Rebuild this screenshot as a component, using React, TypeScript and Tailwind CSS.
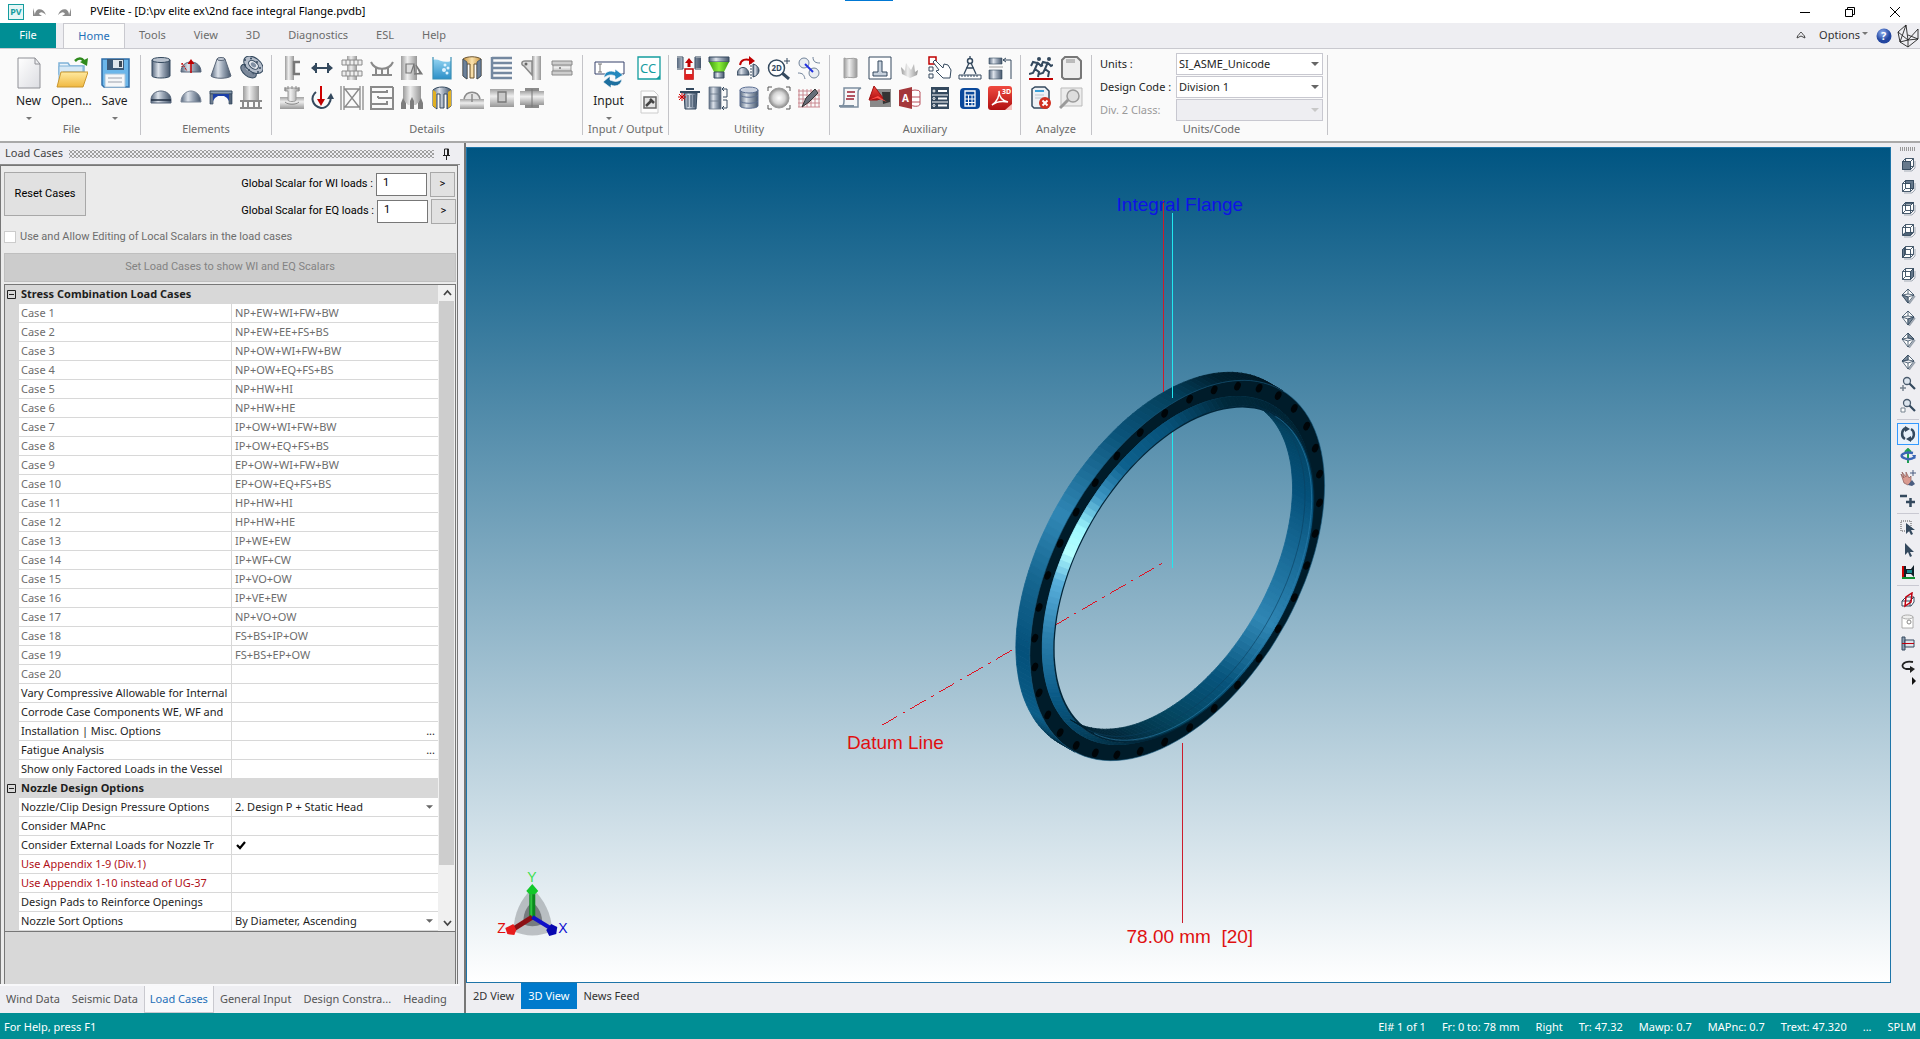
import type { ReactNode } from 'react';

const SHADE_STEEL = 'url(#steel)';
const SHADE_METAL = 'url(#metal)';
const INK = '#34495e';
const GREY = '#8a8a8a';

function Defs() {
  return (
    <svg className="absolute h-0 w-0" aria-hidden="true">
      <defs>
        <linearGradient id="steel">
          <stop offset="0" stopColor="#56677d" />
          <stop offset=".35" stopColor="#dde3eb" />
          <stop offset=".6" stopColor="#9aa6b6" />
          <stop offset="1" stopColor="#45566b" />
        </linearGradient>
        <linearGradient id="metal">
          <stop offset="0" stopColor="#9c9c9c" />
          <stop offset=".4" stopColor="#efefef" />
          <stop offset="1" stopColor="#969696" />
        </linearGradient>
        <linearGradient id="metalDown" x2="0" y2="1">
          <stop offset="0" stopColor="#a2a2a2" />
          <stop offset=".4" stopColor="#eeeeee" />
          <stop offset="1" stopColor="#989898" />
        </linearGradient>
        <linearGradient id="gold">
          <stop offset="0" stopColor="#c8923c" />
          <stop offset=".5" stopColor="#fbe3ae" />
          <stop offset="1" stopColor="#c8923c" />
        </linearGradient>
        <linearGradient id="folder" x2="0" y2="1">
          <stop offset="0" stopColor="#ffeaa0" />
          <stop offset="1" stopColor="#f0b840" />
        </linearGradient>
        <linearGradient id="water" x2="0" y2="1">
          <stop offset="0" stopColor="#8fd0ef" />
          <stop offset="1" stopColor="#2b8fc8" />
        </linearGradient>
        <linearGradient id="green">
          <stop offset="0" stopColor="#3c9a10" />
          <stop offset=".5" stopColor="#8df03a" />
          <stop offset="1" stopColor="#3c9a10" />
        </linearGradient>
        <linearGradient id="paper" x1="0" y1="0" x2="1" y2="1">
          <stop offset="0" stopColor="#ffffff" />
          <stop offset="1" stopColor="#dcdde2" />
        </linearGradient>
        <linearGradient id="red" x2="0" y2="1">
          <stop offset="0" stopColor="#f04a40" />
          <stop offset="1" stopColor="#b00f10" />
        </linearGradient>
        <radialGradient id="ball">
          <stop offset="0" stopColor="#ffffff" />
          <stop offset=".6" stopColor="#d4d4d4" />
          <stop offset="1" stopColor="#888888" />
        </radialGradient>
        <radialGradient id="help" cx=".4" cy=".3">
          <stop offset="0" stopColor="#8fb0f0" />
          <stop offset="1" stopColor="#2346a0" />
        </radialGradient>
      </defs>
    </svg>
  );
}

/* ---------- Ribbon icons, all on a 24 unit grid ---------- */

const ELEMENTS: [string, ReactNode][] = [
  ['Cylinder', <><path d="M3 4v16c0 1 4 2 9 2s9-1 9-2V4z" fill={SHADE_STEEL} stroke={INK} /><ellipse cx="12" cy="4" rx="9" ry="2.500" fill="#b9c2ce" stroke={INK} /></>],
  ['Torispherical head', <><path d="M2 16c0-7 5-10 10-10s10 3 10 10z" fill={SHADE_STEEL} stroke="#56657a" /><path d="M12 17V6" stroke="#c00000" strokeWidth="1.500" /><path d="M8.500 8L12 3l3.500 5z" fill="#c00000" /><path d="M3 7l5 8M3 7v4" stroke="#c00000" strokeDasharray="2 1" /></>],
  ['Cone', <><path d="M8 3L2 20c3 3 17 3 20 0L16 3z" fill={SHADE_STEEL} stroke="#596678" /><ellipse cx="12" cy="3" rx="4" ry="1.500" fill="#c5ccd6" stroke="#596678" /></>],
  ['Body flange', <><g transform="rotate(38 12 12)"><ellipse cx="12" cy="16" rx="9" ry="5" fill="#7b889a" stroke={INK} /><rect x="6" y="10" width="12" height="6" fill={SHADE_STEEL} /><ellipse cx="12" cy="8" rx="11" ry="7" fill="#b4bdca" stroke={INK} /><ellipse cx="12" cy="8" rx="5.500" ry="3.500" fill="#e6eaef" stroke={INK} /><ellipse cx="12" cy="8" rx="3" ry="2" fill="#8190a3" /></g><g fill={INK}><circle cx="6" cy="4" r="1" /><circle cx="12" cy="2.500" r="1" /><circle cx="18" cy="6" r="1" /><circle cx="21" cy="12" r="1" /><circle cx="19" cy="16" r="1" /><circle cx="6" cy="9" r="1" /><circle cx="10" cy="14" r="1" /></g></>],
  ['Elliptical head', <><path d="M2 17v-3C2 8 7 5 12 5s10 3 10 9v3z" fill={SHADE_STEEL} stroke="#56657a" /><path d="M2 14h20" stroke="#1f2e42" strokeWidth="1.500" /></>],
  ['Spherical head', <path d="M2 16c0-7 5-11 10-11s10 4 10 11z" fill={SHADE_STEEL} stroke="#7b8798" />],
  ['Flat head', <><path d="M1 5h22v3H1z" fill="#8b9eb2" stroke={INK} /><path d="M1 8h3v10H1zM20 8h3v10h-3z" fill={SHADE_STEEL} stroke={INK} strokeWidth=".7" /><path d="M4 8h16v7l-2-3-3-2H9l-3 2-2 3z" fill="#1b3fa8" /></>],
  ['Skirt', <><path d="M4 0h16v15H4z" fill={SHADE_METAL} /><path d="M1 15h22M1 22h22M4 15v7M9 15v7M15 15v7M20 15v7" stroke={GREY} strokeWidth="2" /></>],
];

const DETAILS: [string, ReactNode][] = [
  ['Stiffening ring', <><path d="M5 0h9v24H5z" fill={SHADE_METAL} /><path d="M14 5v14M14 6h6M14 18h6" stroke="#777" strokeWidth="2.500" /></>],
  ['Width', <><path d="M5 12h14M6 7v10M18 7v10" stroke={INK} strokeWidth="2" /><path d="M1 12l6-5v10zM23 12l-6-5v10z" fill={INK} /></>],
  ['Trays', <><path d="M7 0h10v24H7z" fill={SHADE_METAL} /><path d="M2 4h20v5H2zM2 15h20v5H2zM6 4v5M10 4v5M14 4v5M18 4v5M6 15v5M10 15v5M14 15v5M18 15v5" stroke={GREY} fill="#eee" /></>],
  ['Saddle', <><path d="M1 6c4 9 18 9 22 0" fill="none" stroke={GREY} strokeWidth="2" /><path d="M2 19h20M6 11v8M12 13v6M18 11v8" stroke={GREY} strokeWidth="2" /></>],
  ['Clip', <><path d="M1 0h16v24H1z" fill={SHADE_METAL} /><path d="M6 8h8l-3 9H6zM14 8l1 10 5-1-4-8 6 9h-8" fill="#ddd" stroke="#777" strokeWidth="1.200" /></>],
  ['Liquid', <><path d="M3 4c6-2 9 4 18 1v18H3z" fill="url(#water)" /><path d="M3 1v22h18V1" fill="none" stroke="#3a8fb5" strokeWidth="1.200" /><g fill="#dff3ff"><circle cx="15" cy="9" r="1.500" /><circle cx="18" cy="12" r="1.500" /><circle cx="14" cy="14" r="2" /><circle cx="17" cy="17" r="1.500" /></g></>],
  ['Insulation', <><path d="M3 3c4-3 14-3 18 0v17l-4 3V8h-3v14h-4V8H7v15l-4-3z" fill="url(#gold)" stroke="#6b5430" /><path d="M3 3l4 3v17l-4-3zM21 3l-4 3v17l4-3z" fill="#6d8199" stroke={INK} strokeWidth=".7" /></>],
  ['Packing', <path d="M2 2h20M2 7h20M2 12h20M2 17h20M2 22h20M2 1v22" stroke="#7488a0" strokeWidth="2.500" />],
  ['Lug', <><path d="M12 0h9v24h-9z" fill={SHADE_METAL} /><path d="M12 5H5c-4 0-4 4-1 5l8 9z" fill="#ddd" stroke={GREY} strokeWidth="1.500" /><circle cx="6" cy="8" r="1.500" fill="#666" /></>],
  ['Half pipe', <><path d="M3 7h18v11H3z" fill="url(#metalDown)" stroke="#999" /><path d="M2 5h20v4H2zM2 15h20v4H2z" fill="#cdcdcd" stroke="#888" /><circle cx="10" cy="12" r="1" fill="#777" /></>],
  ['Nozzle', <><path d="M0 11h24v12H0z" fill="url(#metalDown)" /><path d="M5 2h14v3h-3v9c0 2-8 2-8 0V5H5z" fill={SHADE_METAL} stroke="#999" /><path d="M5 1v4M8 0v3M12 0v3M16 0v3M19 1v4M5 16c3 3 11 3 14 0" stroke={GREY} fill="none" /></>],
  ['Forces and moments', <><path d="M6 6c-6 5-4 14 5 16 7 0 10-6 10-12" fill="none" stroke={INK} strokeWidth="2" /><path d="M17 13l4-6 3 6z" fill={INK} /><path d="M11 0v14" stroke="#d00000" strokeWidth="2" /><path d="M7 13h8l-4 7z" fill="#c00000" /></>],
  ['Packed bed', <path d="M1 0v24M4 0v24M20 0v24M23 0v24M4 3h16M4 21h16M5 3l14 18M19 3L5 21" fill="none" stroke={GREY} strokeWidth="1.300" />],
  ['Baffles', <path d="M23 1H1v22h22V1M1 6h16v-2M23 12H8M8 12v-2M1 18h16v-3" fill="none" stroke={GREY} strokeWidth="2" />],
  ['Legs', <><path d="M3 0h18v13l-5 6H8l-5-6z" fill={SHADE_METAL} /><path d="M1 23v-6l2-5 3 5v6zM10 23v-8l2-4 2 4v8zM18 23v-6l3-5 2 5v6z" fill="#7d7d7d" /></>],
  ['Lining', <><path d="M3 4c4-4 14-4 18 0v16l-4 3V8h-3v14h-4V8H7v15l-4-3z" fill={SHADE_STEEL} stroke={INK} /><path d="M3 4l3 2v16l-3-2zM18 6l3-2v16l-3 2z" fill="#e0b023" /></>],
  ['Reinforcing pad', <><path d="M0 13h24v10H0z" fill="url(#metalDown)" /><path d="M4 13c2-9 14-9 16 0M12 8v8" fill="#e4e4e4" stroke={GREY} strokeWidth="1.500" /></>],
  ['Platform', <><path d="M0 3h24v18H0z" fill="url(#metalDown)" /><path d="M8 6h8v10H8z" fill="#c9c9c9" stroke="#777" strokeWidth="1.300" /></>],
  ['Stiffener', <><path d="M0 5h24v14H0z" fill="url(#metalDown)" /><path d="M5 2h14v3H5zM5 19h14v3H5z" fill={GREY} /><path d="M12 3v18" stroke="#777" /></>],
];

const UTILITY: [string, ReactNode][] = [
  ['Insert element', <><path d="M0 2h6v10H0zM18 2h6v10h-6z" fill={SHADE_STEEL} /><path d="M0 1h6v12H0M24 1h-6v12h6" fill="none" stroke={INK} /><path d="M8 13h8v10H8z" fill="#fff" stroke="#c00000" strokeWidth="1.500" /><path d="M8 18h8v5H8z" fill="#e02020" /><path d="M8 7l4-5 4 5h-2.500v4h-3V7z" fill="#c00000" /></>],
  ['Change diameter', <><path d="M2 1h20v5H2z" fill={SHADE_STEEL} stroke={INK} /><path d="M2 6h20l-5 10H7z" fill="url(#green)" /><path d="M7 16h10v6H7z" fill={SHADE_STEEL} stroke={INK} /></>],
  ['Flip element', <><path d="M0 19c0-10 12-10 12 0z" fill={SHADE_STEEL} stroke={INK} /><path d="M16 8v13c8-2 8-11 0-13z" fill={SHADE_STEEL} stroke={INK} /><path d="M14 6v18" stroke={INK} strokeDasharray="2 1" /><path d="M3 9c1-6 6-6 10-5" fill="none" stroke="#c00000" strokeWidth="2" /><path d="M12 0l6 5-6 4z" fill="#c00000" /></>],
  ['2D zoom', <><circle cx="9.500" cy="12" r="8" fill="#fff" stroke={INK} strokeWidth="1.500" /><text x="4.500" y="15" fontSize="8" fontWeight="700" fill={INK}>2D</text><path d="M15 17l7 6" stroke={INK} strokeWidth="3" /><path d="M20 2v6M17 5h6" stroke={INK} /></>],
  ['Link nozzles', <><circle cx="7" cy="7" r="5" fill="#e9edf2" stroke="#71839a" /><circle cx="17" cy="17" r="5" fill="#e9edf2" stroke="#71839a" /><path d="M8 8l8 8" stroke="#2030e0" strokeWidth="2" /><path d="M16 1c0 5 3 6 7 6M1 17c5 0 6 2 7 6" stroke="#71839a" fill="none" /></>],
  ['Delete element', <><path d="M7 7h13l-1 16H8z" fill={SHADE_STEEL} stroke={INK} /><path d="M3 6h20M9 3h8" stroke={INK} strokeWidth="2" /><path d="M11 9v12M14 9v12M17 9v12" stroke={INK} /><path d="M5 7v8M1 11h8M2 8l6 6M8 8l-6 6" stroke="#d00000" /></>],
  ['Element order', <><path d="M2 1h12v22H2zM2 8h12M2 15h12" fill={SHADE_STEEL} stroke="#6b7a8c" strokeWidth=".8" /><path d="M16 3h4v8h-4M16 14h4v8h-4M17 1l-2 2 2 2M17 20l-2 2 2 2" fill="none" stroke={INK} /></>],
  ['Materials', <><path d="M3 4v16c0 3 18 3 18 0V4z" fill={SHADE_STEEL} stroke="#5c6f92" /><ellipse cx="12" cy="4" rx="9" ry="3" fill="#c8d0de" stroke="#5c6f92" /><path d="M3 9c2 3 16 3 18 0M3 15c2 3 16 3 18 0" fill="none" stroke="#5c6f92" /></>],
  ['Sphere', <><circle cx="12" cy="12" r="10" fill="url(#ball)" stroke="#999" /><path d="M1 5V1h4M19 1h4v4M23 19v4h-4M5 23H1v-4" fill="none" stroke="#555" /></>],
  ['Edit grid', <><path d="M2 3v18M6 3v18M10 3v18M14 3v18M18 3v18M22 3v18M1 5h22M1 9h22M1 13h22M1 17h22M1 21h22" stroke="#c98890" /><path d="M5 21l4-9 9-9 3 4-9 9z" fill="#666d78" stroke="#333" /></>],
];

const AUXILIARY: [string, ReactNode][] = [
  ['Pipe', <path d="M6 2c3 2 9-1 13 1v18c-4 2-8-1-13 1z" fill={SHADE_METAL} stroke="#a0a0a0" />],
  ['Base ring', <><path d="M1 1h22v22H1z" fill="#fff" stroke={INK} /><path d="M10 5h4v11h5v4H5v-4h5z" fill="#c8d2dd" stroke={INK} /></>],
  ['Seismic', <path d="M4 18l-1-7 4 4 1-8 5 7 3-6 1 8 3-2-1 5-7 3z" fill={SHADE_METAL} />],
  ['Select list', <><path d="M1 1h7v7H1z" fill="#fff" stroke="#c00000" strokeWidth="1.500" /><path d="M1 11h4v4H1zM1 18h4v4H1z" fill="none" stroke={INK} /><path d="M7 4l8 8 1-4 4 1 3 5-1 8h-7l-7-7 3-1-6-8z" fill="#fff" stroke={INK} /></>],
  ['Measure', <><path d="M1 19h22v4H1zM4 19v2M7 19v2M10 19v2M13 19v2M16 19v2M19 19v2" fill="#fff" stroke={INK} /><circle cx="12" cy="5" r="2.500" fill="#fff" stroke={INK} strokeWidth="1.500" /><path d="M12 0v3M11 7L6 18M13 7l5 11M8 12h8" stroke={INK} strokeWidth="1.300" /></>],
  ['Nozzle schedule', <><path d="M1 2h13v6H1zM1 14h13v9H1z" fill={SHADE_STEEL} stroke={INK} strokeWidth=".6" /><path d="M15 4h8v19M18 2l-3 2 3 2" fill="none" stroke={INK} /><path d="M1 11h14" stroke="#a0a0a0" /></>],
  ['Input echo', <><path d="M6 2h17c-3 1-3 3-3 6v13H2c3-1 4-2 4-6z" fill="#f6f7f8" stroke="#7d8fa0" strokeWidth="1.500" /><path d="M1 20h15" stroke="#7d8fa0" strokeWidth="2" /><path d="M9 6h8M9 10h8M8 13h8" stroke="#9d2030" strokeWidth="1.500" /></>],
  ['AutoCAD export', <><path d="M9 3h14v18H2v-8z" fill="#8a8a8a" /><path d="M14 6h8v10l-7 2z" fill="#333" /><path d="M1 14L6 0l9 12-6 2z" fill="url(#red)" stroke="#a01010" /><path d="M1 14l8-2 10 4-9-6z" fill="#ff5048" /></>],
  ['Access export', <><ellipse cx="17" cy="6" rx="5" ry="2" fill="#fff" stroke="#b8505c" /><path d="M12 6v12c2 3 10 3 10 0V6" fill="#fff" stroke="#b8505c" /><path d="M13 11h9M13 16h9" stroke="#b8505c" /><path d="M1 4l13-3v22L1 20z" fill="#a4373a" /><text x="4" y="16" fontSize="10" fontWeight="700" fill="#fff">A</text></>],
  ['Setup', <><path d="M3 1h18v22H3z" fill={INK} /><path d="M4 9h16M4 16h16" stroke="#fff" /><path d="M10 5h9M10 12.500h9M10 19.500h9" stroke="#fff" strokeWidth="2" /><g fill="none" stroke="#fff"><circle cx="6" cy="5" r="1" /><circle cx="6" cy="12.500" r="1" /><circle cx="6" cy="19.500" r="1" /></g></>],
  ['Calculator', <><rect x="2" y="2" width="20" height="21" rx="4" fill="#09489b" /><path d="M7 5h10v15H7z" fill="none" stroke="#fff" strokeWidth="1.300" /><path d="M7 9h10M7 13h10M7 16.500h10M10.500 9v11M14 9v11" stroke="#fff" /></>],
  ['3D PDF', <><rect x="0" y="0" width="24" height="24" rx="3" fill="url(#red)" /><path d="M4 19c5-3 8-10 7-14 0 7 5 10 9 11-5-1-11-1-16 3z" fill="none" stroke="#fff" strokeWidth="1.500" /><text x="14" y="8" fontSize="7" fontWeight="700" fill="#fff">3D</text><path d="M17 24l7-6v6z" fill="#f5c0bc" /></>],
];

const RUNNER = 'M9 6L6 13l4 3-1 5M6 13l-2 4-4 1M8 7L4 6 2 10M9 7l3 3 2-1';

const ANALYZE: [string, ReactNode][] = [
  ['Analyze', <><circle cx="10" cy="3" r="2" fill={INK} /><circle cx="20" cy="3" r="2" fill={INK} /><path d={RUNNER} fill="none" stroke={INK} strokeWidth="2" /><g transform="translate(10 0)"><path d={RUNNER} fill="none" stroke={INK} strokeWidth="2" /></g><path d="M0 23h24" stroke="#c00000" strokeWidth="2" /></>],
  ['Review', <><path d="M3 4l3-3h12l4 4v17l-2 1H5l-2-2z" fill="#ededed" stroke="#777" strokeWidth="2" /><path d="M7 4h9M7 6h9" stroke="#888" /></>],
  ['Errors', <><path d="M3 3l3-2h10l4 4v14l-2 3H5l-2-2z" fill="#eef1f5" stroke={INK} strokeWidth="1.500" /><path d="M6 5h9" stroke="#3aa0d8" strokeWidth="2" /><path d="M6 9h9M6 12h9" stroke="#b9c3cf" /><circle cx="16" cy="17" r="6" fill="#d03020" /><path d="M13.500 14.500l5 5M18.500 14.500l-5 5" stroke="#fff" strokeWidth="2" /></>],
  ['Preview', <><path d="M2 2h21v18H2z" fill="#ececec" stroke="#bbb" /><circle cx="14" cy="10" r="6" fill="#ddd" stroke="#9a9a9a" strokeWidth="1.500" /><path d="M9 14l-8 8" stroke="#9a9a9a" strokeWidth="3" /></>],
];

/* ---------- Right hand view toolbar, 16 unit grid ---------- */

const CUBE = 'M2.500 5.500l3-3h8v8l-3 3h-8zM2.500 5.500h8v8M10.500 5.500l3-3M5.500 2.500v8h8M5.500 10.500l-3 3';
const ISO = 'M8 1l6 6-6 8-6-8zM2 7l6 2 6-2M8 9v6M8 1v5M2 7l6-1 6 1';

const cube = (d: string) => (
  <><path d="M4 15h8l3-3V5" fill="none" stroke="#a4acb6" /><path d={CUBE} fill="#fff" stroke={INK} strokeWidth=".9" /><path d={d} fill="#66788b" stroke={INK} strokeWidth=".9" /></>
);
const iso = (d: string) => (
  <><path d="M9 16l6-8" stroke="#9aa3ae" strokeWidth="1.500" /><path d={ISO} fill="#fff" stroke={INK} strokeWidth=".8" /><path d={d} fill="#7b8a9a" stroke={INK} strokeWidth=".8" /></>
);
const magnifier = (
  <><circle cx="7" cy="5" r="3.500" fill="#dde5ee" stroke="#4b5b6d" strokeWidth="1.300" /><path d="M9.500 7.500L15 13" stroke={INK} strokeWidth="2.200" /></>
);

const VIEW_TOOLS: [string, ReactNode][][] = [
  [
    ['Front', cube('M2.500 5.500h8v8h-8z')],
    ['Back', cube('M5.500 2.500h8v8h-3v-5h-5z')],
    ['Top', cube('M4 4l1.500-1.500h8L12 4z')],
    ['Bottom', cube('M3 13l1.500-2H12l-1.500 2z')],
    ['Left', cube('M2.500 5.500l2-2v8l-2 2z')],
    ['Right', cube('M10.500 5.500l3-3v8l-3 3z')],
    ['Isometric SW', iso('M2 7l6 2v6z')],
    ['Isometric SE', iso('M14 7L8 9v6z')],
    ['Isometric NE', iso('M8 1l6 6-6-1z')],
    ['Isometric NW', iso('M8 1L2 7l6-1z')],
    ['Zoom extents', <>{magnifier}<path d="M3 9v6M0 12h6" stroke="#77838f" strokeWidth="1.500" /></>],
    ['Zoom window', <>{magnifier}<path d="M1 10h4v4H1z" fill="#fff" stroke="#77838f" /></>],
  ],
  [
    ['Orbit', <><path d="M6 2C1 4 1 11 5 13M10 14c5-2 5-9 1-11" fill="none" stroke={INK} strokeWidth="2.500" /><path d="M5 0l5 3-5 3zM11 16l-5-3 5-3z" fill={INK} /></>],
    ['Turntable', <><path d="M8 1v14M5 4l3-3 3 3" fill="none" stroke="#1fa050" strokeWidth="2" /><path d="M13 5C4 3-2 8 4 10c4 2 8 1 11-1" fill="none" stroke="#3a66b5" strokeWidth="2.500" /><path d="M12 7l4 0-1 4z" fill="#3a66b5" /></>],
    ['Pan', <><path d="M1 4l3 4-2-6 4 5V2l3 6 2-2v6l-3 3-4-2z" fill="#d99a90" stroke="#8a5a58" strokeWidth=".7" /><path d="M8 15l4-5 3 4-3 2z" fill="#4a5d80" /><path d="M13 0v6M10 3h6" stroke="#4a5d80" /></>],
    ['Zoom', <path d="M0 4h7M6 10h9M10.500 6v9" stroke={INK} strokeWidth="2.500" />],
  ],
  [
    ['Select window', <><path d="M1 1h10v10H1z" fill="none" stroke="#555" strokeDasharray="1 1" /><path d="M6 3v11l3-3 2 4 2-1-2-4h4z" fill={INK} /></>],
    ['Select', <path d="M5 1v12l3-3 2 5 2-1-2-4h4z" fill={INK} />],
    ['Show axes', <><path d="M3 2v12" stroke="#d00000" strokeWidth="2" /><path d="M2 14h13" stroke="#109030" strokeWidth="2" /><path d="M4 2h2v3h5l3-4v12l-3-3H6v3H4z" fill="#102028" /><path d="M7 6h5v3H7z" fill="#1a8a90" /></>],
  ],
  [
    ['Clip plane', <><path d="M2 9l4-4h8v5l-3 4H2zM2 9h8l4-4M10 9v5" fill="#fff" stroke={INK} /><path d="M5 14l1-9 6-4-1 9z" fill="none" stroke="#c00010" strokeWidth="1.500" /></>],
    ['Transparent', <><path d="M2 3h11v11H2z" fill="#fff" stroke="#999" strokeWidth=".8" /><ellipse cx="7.500" cy="3" rx="5.500" ry="2" fill="#eee" stroke="#999" strokeWidth=".8" /><circle cx="9" cy="8" r="2" fill="none" stroke="#888" /></>],
    ['Flange view', <><path d="M2 1h3v13H2z" fill="#8fa0b2" stroke={INK} /><path d="M5 4h9v7H5z" fill="#dde3ea" stroke={INK} /><path d="M2 7.500h12" stroke="#c00010" /></>],
    ['Rotate', <><path d="M13 4C3 2-1 9 6 11h6" fill="none" stroke="#222" strokeWidth="1.800" /><path d="M10 8l5 3-5 4z" fill="#222" /></>],
  ],
];

/* ---------- Load case grid ---------- */

const CASES = [
  'NP+EW+WI+FW+BW', 'NP+EW+EE+FS+BS', 'NP+OW+WI+FW+BW', 'NP+OW+EQ+FS+BS', 'NP+HW+HI',
  'NP+HW+HE', 'IP+OW+WI+FW+BW', 'IP+OW+EQ+FS+BS', 'EP+OW+WI+FW+BW', 'EP+OW+EQ+FS+BS',
  'HP+HW+HI', 'HP+HW+HE', 'IP+WE+EW', 'IP+WF+CW', 'IP+VO+OW',
  'IP+VE+EW', 'NP+VO+OW', 'FS+BS+IP+OW', 'FS+BS+EP+OW', '',
];

interface GridRow {
  label: string;
  kind?: 'more' | 'check' | 'select';
  value?: string;
  tone?: string;
}

const STRESS_ROWS: GridRow[] = [
  ...CASES.map((value, i) => ({ label: `Case ${i + 1}`, value, tone: 'text-[#6d6d6d]' })),
  { label: 'Vary Compressive Allowable for Internal' },
  { label: 'Corrode Case Components WE, WF and' },
  { label: 'Installation | Misc. Options', kind: 'more' },
  { label: 'Fatigue Analysis', kind: 'more' },
  { label: 'Show only Factored Loads in the Vessel' },
];

const NOZZLE_ROWS: GridRow[] = [
  { label: 'Nozzle/Clip Design Pressure Options', kind: 'select', value: '2. Design P + Static Head' },
  { label: 'Consider MAPnc' },
  { label: 'Consider External Loads for Nozzle Tr', kind: 'check' },
  { label: 'Use Appendix 1-9 (Div.1)', tone: 'text-[#b01018]' },
  { label: 'Use Appendix 1-10 instead of UG-37', tone: 'text-[#b01018]' },
  { label: 'Design Pads to Reinforce Openings' },
  { label: 'Nozzle Sort Options', kind: 'select', value: 'By Diameter, Ascending' },
];

const PANEL_TABS = ['Wind Data', 'Seismic Data', 'Load Cases', 'General Input', 'Design Constra...', 'Heading'];
const STATUS = ['El# 1 of 1', 'Fr: 0 to: 78 mm', 'Right', 'Tr: 47.32', 'Mawp: 0.7', 'MAPnc: 0.7', 'Trext: 47.320', '...', 'SPLM'];

function Icon({ children, className = 'h-6 w-6', box = 24 }: { children: ReactNode; className?: string; box?: number }) {
  return <svg className={`${className} shrink-0`} viewBox={`0 0 ${box} ${box}`} fill="none" aria-hidden="true">{children}</svg>;
}

function Triangle({ className }: { className: string }) {
  return <svg className={className} viewBox="0 0 8 4" aria-hidden="true"><path d="M0 0h8L4 4z" fill="currentColor" /></svg>;
}

function Group({ title, children, className = 'px-[5px]' }: { title: string; children: ReactNode; className?: string }) {
  return (
    <section className="flex py-1">
      <div className={`flex flex-col ${className}`}>
        <div className="flex-1">{children}</div>
        <p className="text-center text-[11px] leading-4 text-[#6a6a6a]">{title}</p>
      </div>
      <div className="my-0.5 w-px bg-[#c4c4c8]" />
    </section>
  );
}

function IconGrid({ items, columns }: { items: [string, ReactNode][]; columns: string }) {
  return (
    <div className={`grid ${columns}`}>
      {items.map(([name, art]) => (
        <button key={name} type="button" aria-label={name} className="flex h-[30px] w-[30px] items-center justify-center">
          <Icon>{art}</Icon>
        </button>
      ))}
    </div>
  );
}

function BigButton({ label, arrow, children }: { label: string; arrow?: boolean; children: ReactNode }) {
  return (
    <button type="button" className="flex w-[43px] flex-col items-center pt-1 text-xs leading-4 text-[#1e1e1e]">
      <svg className="h-8 w-8" viewBox="0 0 32 32" fill="none" aria-hidden="true">{children}</svg>
      <span className="mt-1">{label}</span>
      {arrow && <Triangle className="mt-2 h-[3px] w-1.5 text-[#777]" />}
    </button>
  );
}

function Ribbon() {
  return (
    <div className="flex h-[95px] shrink-0 border-t border-b-2 border-t-[#c9c9cf] border-b-[#a9a9a9] bg-[#fafafa]">
      <Group title="File" className="pr-1 pl-[7px]">
        <div className="flex">
          <BigButton label="New" arrow>
            <path d="M5 1h17l5 6v24H5z" fill="url(#paper)" stroke="#8f9096" />
            <path d="M22 1v6h5" stroke="#8f9096" />
          </BigButton>
          <BigButton label="Open...">
            <path d="M3 6h9l2 3h14v8H3z" fill="#eaf3fa" stroke="#7fb2d8" strokeWidth="1.500" />
            <path d="M3 30V9h24v6H7z" fill="#d6e8f5" stroke="#7fb2d8" />
            <path d="M5 15h27l-5 15H1z" fill="url(#folder)" stroke="#c9962e" />
            <path d="M19 4c4-4 8-3 10 2" stroke="#2f8a1c" strokeWidth="2.500" />
            <path d="M24 5l8-4-1 8z" fill="#2f8a1c" />
          </BigButton>
          <BigButton label="Save" arrow>
            <path d="M3 2h27v28H5l-2-2z" fill="#6bb6ea" stroke="#2f6ea8" strokeWidth="1.500" />
            <path d="M8 2h17v11H8z" fill="#3c5a78" />
            <path d="M14 3h10v8H14z" fill="#dfe7ee" />
            <path d="M20 4h3v6h-3z" fill="#3b4a58" />
            <path d="M6 17h20v13H6z" fill="#f5f7f9" stroke="#a9c4da" />
            <path d="M9 21h14M9 25h14" stroke="#b9bfc6" strokeWidth="1.500" />
          </BigButton>
        </div>
      </Group>
      <Group title="Elements"><IconGrid items={ELEMENTS} columns="grid-cols-4" /></Group>
      <Group title="Details"><IconGrid items={DETAILS} columns="grid-cols-10" /></Group>
      <Group title="Input / Output" className="px-1">
        <div className="flex gap-1">
          <BigButton label="Input" arrow>
            <path d="M2 5h29v12H2z" fill="#fff" stroke="#34406a" />
            <path d="M5 7h4M7 7v8M5 15h4" stroke="#777" />
            <path d="M11 21c0-7 7-8 11-6v-3l8 6-8 5v-4c-4-2-8-1-11 2z" fill="#2388bd" stroke="#fafafa" strokeWidth=".7" />
            <path d="M29 22c-1 7-7 8-11 6v3l-8-6 7-6v4c5 2 8 2 12-1z" fill="#1c6f9f" stroke="#fafafa" strokeWidth=".7" />
          </BigButton>
          <IconGrid
            columns="grid-cols-1"
            items={[
              ['CC', <><path d="M1 1h22v22H1z" fill="#fff" stroke="#159d9f" strokeWidth="1.300" /><text x="3" y="17" fontSize="13" fill="#159d9f">CC</text><path d="M19 23l4-4v4z" fill="#159d9f" /></>],
              ['Export', <><path d="M4 1h13l4 4v18H4z" fill="#fdfdfd" stroke="#ccc" /><path d="M7 7h12v11H7z" fill="#e4e4e4" stroke="#666" strokeWidth="1.500" /><path d="M9 16l5-5M13 9l4 4" stroke="#444" strokeWidth="2.500" /></>],
            ]}
          />
        </div>
      </Group>
      <Group title="Utility"><IconGrid items={UTILITY} columns="grid-cols-5" /></Group>
      <Group title="Auxiliary"><IconGrid items={AUXILIARY} columns="grid-cols-6" /></Group>
      <Group title="Analyze"><IconGrid items={ANALYZE} columns="grid-cols-2" /></Group>
      <Group title="Units/Code" className="pr-1 pl-2">
        <div className="flex flex-col gap-px text-[11px] text-[#1e1e1e]">
          <RibbonSelect id="units" label="Units :" value="SI_ASME_Unicode" />
          <RibbonSelect id="design-code" label="Design Code :" value="Division 1" />
          <RibbonSelect id="div2" label="Div. 2 Class:" value="" disabled />
        </div>
      </Group>
    </div>
  );
}

function RibbonSelect({ id, label, value, disabled }: { id: string; label: string; value: string; disabled?: boolean }) {
  return (
    <div className="flex items-center">
      <label htmlFor={id} className={`w-[76px] whitespace-nowrap ${disabled ? 'text-[#9a9a9a]' : ''}`}>{label}</label>
      <div className="relative w-[147px]">
        <select id={id} disabled={disabled} className={`h-[22px] w-full appearance-none border border-[#c8c8d0] px-0.5 ${disabled ? 'bg-[#eeeef2]' : 'bg-white'}`}>
          <option>{value}</option>
        </select>
        <Triangle className={`pointer-events-none absolute top-[9px] right-1 h-1 w-2 ${disabled ? 'text-[#c8c8c8]' : 'text-[#666]'}`} />
      </div>
    </div>
  );
}

function TitleBar() {
  return (
    <header className="relative flex h-[23px] shrink-0 items-center bg-white px-2">
      <div className="absolute top-0 left-[44%] h-px w-12 bg-[#0078d4]" />
      <span className="flex h-4 w-4 items-center justify-center border border-[#159d9f] bg-[#e6f6f6] text-[9px] font-bold text-[#159d9f]">PV</span>
      <button type="button" aria-label="Undo" className="ml-2"><Icon box={16} className="h-4 w-4"><path d="M3 11c0-7 8-8 11 0-4-4-6-3-7-1l3 2H1V4z" fill="#8b8b8b" /></Icon></button>
      <button type="button" aria-label="Redo" className="ml-2"><Icon box={16} className="h-4 w-4"><path d="M13 11c0-7-8-8-11 0 4-4 6-3 7-1l-3 2h9V4z" fill="#8b8b8b" /></Icon></button>
      <h1 className="ml-[18px] flex-1 text-[11px] text-black">PVElite - [D:\pv elite ex\2nd face integral Flange.pvdb]</h1>
      <div className="flex gap-[31px] pr-2.5">
        <button type="button" aria-label="Minimize"><Icon box={14} className="h-3.5 w-3.5"><path d="M2 7.500h10" stroke="#000" /></Icon></button>
        <button type="button" aria-label="Restore"><Icon box={14} className="h-3.5 w-3.5"><path d="M2.500 4.500h7v7h-7zM4.500 4.500v-2h7v7h-2" stroke="#000" /></Icon></button>
        <button type="button" aria-label="Close"><Icon box={14} className="h-3.5 w-3.5"><path d="M2 2l10 10M12 2L2 12" stroke="#000" /></Icon></button>
      </div>
    </header>
  );
}

function MenuBar() {
  return (
    <nav className="flex h-[25px] shrink-0 items-stretch bg-[#eeeef2] text-[11px] text-[#6b6b6b]">
      <button type="button" className="mr-[7px] w-14 bg-[#008e94] text-white">File</button>
      <button type="button" className="-mb-px w-[62px] border border-b-0 border-[#c9c9cf] bg-[#fafafa] text-[#1e70b8]">Home</button>
      {['Tools', 'View', '3D', 'Diagnostics', 'ESL', 'Help'].map((tab) => (
        <button key={tab} type="button" className="px-3.5">{tab}</button>
      ))}
      <div className="ml-auto flex items-center text-[#333]">
        <button type="button" aria-label="Collapse ribbon"><Icon box={12} className="h-3 w-3"><path d="M2 8c0-3 4-5 4-6 0 1 4 3 4 6l-4-2z" stroke="#444" /></Icon></button>
        <button type="button" className="ml-3 flex items-center">Options<Triangle className="mt-[-4px] ml-0.5 h-[3px] w-1.5 text-[#777]" /></button>
        <button type="button" aria-label="Help" className="ml-2">
          <Icon box={16} className="h-4 w-4"><circle cx="8" cy="8" r="7.500" fill="url(#help)" /><text x="5" y="12" fontSize="11" fontWeight="700" fill="#fff">?</text></Icon>
        </button>
        <Icon className="ml-1 h-6 w-6"><path d="M2 8l8-7 2 15zM2 8l2 10 8-2M10 1l-6 17M12 16l10-11v10l-10 8zM22 15l-10 1M4 18l8 5M12 11l10 4" stroke="#222" strokeWidth=".9" /></Icon>
      </div>
    </nav>
  );
}

function GridHeading({ title }: { title: string }) {
  return (
    <tr className="h-[19px] bg-[#d8d8d8]">
      <td className="px-0.5"><Icon box={9} className="h-[9px] w-[9px]"><path d="M.5.5h8v8h-8zM2 4.500h5" stroke="#222" /></Icon></td>
      <th colSpan={2} className="px-0.5 text-left font-bold">{title}</th>
    </tr>
  );
}

function GridLine({ row }: { row: GridRow }) {
  const id = row.label.replace(/\W+/g, '-').toLowerCase();
  return (
    <tr className={`h-[19px] ${row.tone ?? ''}`}>
      <td className="bg-[#d8d8d8]" />
      <td className="overflow-hidden border-r border-b border-[#d8d8d8] px-0.5 whitespace-nowrap"><label htmlFor={row.kind ? id : undefined}>{row.label}</label></td>
      <td className="border-b border-[#d8d8d8] px-[3px]">
        {!row.kind && row.value}
        {row.kind === 'more' && <button id={id} type="button" className="block w-full text-right leading-4">...</button>}
        {row.kind === 'check' && (
          <span className="relative block h-3 w-3">
            <input id={id} type="checkbox" defaultChecked className="peer block h-3 w-3 appearance-none" />
            <Icon box={12} className="pointer-events-none absolute top-0 left-0 hidden h-3 w-3 peer-checked:block"><path d="M2 6l3 3 5-6" stroke="#000" strokeWidth="2.200" /></Icon>
          </span>
        )}
        {row.kind === 'select' && (
          <span className="relative block">
            <select id={id} className="block w-full appearance-none bg-transparent leading-4"><option>{row.value}</option></select>
            <Triangle className="pointer-events-none absolute top-1.5 right-0.5 h-1 w-[7px] text-[#666]" />
          </span>
        )}
      </td>
    </tr>
  );
}

function ScalarRow({ name }: { name: string }) {
  return (
    <div className="flex items-center">
      <label htmlFor={`scalar-${name}`}>Global Scalar for {name} loads :</label>
      <input id={`scalar-${name}`} defaultValue="1" className="ml-[3px] h-[23px] w-[51px] border border-[#777] bg-white px-1.5 pb-1" />
      <button type="button" aria-label={`Apply ${name} scalar`} className="ml-[3px] h-[25px] w-[25px] border border-[#a8a8a8] bg-[#e1e1e1]">&gt;</button>
    </div>
  );
}

function LoadCasesPanel() {
  return (
    <aside className="flex w-[460px] shrink-0 flex-col bg-[#eeeef2] text-[11px] text-[#1e1e1e]">
      <div className="flex h-[22px] shrink-0 items-center border-b border-[#8c8c8c] pr-2 pl-[5px]">
        <h2 className="text-[#444]">Load Cases</h2>
        <div className="mx-1.5 h-2 flex-1 bg-[radial-gradient(#999_0.7px,transparent_0.8px),radial-gradient(#999_0.7px,transparent_0.8px)] bg-[size:4px_4px] bg-[position:0_0,2px_2px]" />
        <Icon box={12} className="h-3 w-3"><path d="M3 7.500h7M4.500 7V1h4v6M6.500 8v4" stroke="#222" /><path d="M7 1h2v6H7z" fill="#222" /></Icon>
      </div>
      <div className="mr-0.5 flex min-h-0 flex-1 flex-col border-x border-t border-[#777] bg-[#ebebeb] pt-1.5 pr-px pl-[3px]">
        <div className="flex items-start justify-between font-[Roboto,sans-serif] text-black">
          <button type="button" className="h-11 w-[82px] border border-[#a8a8a8] bg-[#e1e1e1]">Reset Cases</button>
          <div className="flex flex-col gap-0.5">
            <ScalarRow name="WI" />
            <ScalarRow name="EQ" />
          </div>
        </div>
        <label className="mt-[5px] flex items-center gap-1 font-[Roboto,sans-serif] text-[#6d6d6d]">
          <input type="checkbox" disabled className="h-3 w-3 appearance-none border border-[#ccc] bg-white" />
          Use and Allow Editing of Local Scalars in the load cases
        </label>
        <button type="button" disabled className="mt-[7px] h-[29px] shrink-0 border border-[#bfbfbf] bg-[#ccc] font-[Roboto,sans-serif] text-[#838383]">Set Load Cases to show WI and EQ Scalars</button>
        <div className="mt-0.5 flex min-h-0 flex-1 flex-col border-x border-t border-[#777] bg-[#d8d8d8]">
          <div className="flex border-b border-[#777] bg-white">
            <table className="flex-1 table-fixed border-separate border-spacing-0 bg-white leading-4">
              <colgroup>
                <col className="w-[14px]" />
                <col className="w-[213px]" />
                <col />
              </colgroup>
              <tbody>
                <GridHeading title="Stress Combination Load Cases" />
                {STRESS_ROWS.map((row) => <GridLine key={row.label} row={row} />)}
                <GridHeading title="Nozzle Design Options" />
                {NOZZLE_ROWS.map((row) => <GridLine key={row.label} row={row} />)}
              </tbody>
            </table>
            <div className="flex w-[17px] flex-col items-center bg-[#f0f0f0]">
              <Icon box={16} className="h-4 w-4"><path d="M5 10l3.500-4L12 10" stroke="#444" strokeWidth="1.800" /></Icon>
              <div className="w-[15px] flex-1 bg-[#cdcdcd]" />
              <div className="flex h-[66px] items-end"><Icon box={16} className="h-4 w-4"><path d="M5 6l3.500 4L12 6" stroke="#444" strokeWidth="1.800" /></Icon></div>
            </div>
          </div>
        </div>
      </div>
      <div className="flex h-[29px] shrink-0 items-stretch border-t-2 border-[#f8f8fa] text-[#555]">
        {PANEL_TABS.map((tab) => (
          <button key={tab} type="button" className={tab === 'Load Cases' ? 'border-x border-b border-[#c9c9cf] bg-[#f8f8fa] px-[5px] whitespace-nowrap text-[#1e70b8]' : 'px-1.5 whitespace-nowrap'}>{tab}</button>
        ))}
      </div>
    </aside>
  );
}

/* ---------- 3D model ---------- */

const CENTER = { x: 710.7, y: 423 };
const OUTER = 208.7;
const FACE_INNER = 191;
const HUB = 185;
const BORE = 183;
const BACK = -19.7;
const FRONT = 9.4;

type Stop = [number, string];

// Isometric projection of a circle lying in the Y-Z plane, shifted along X.
function project(r: number, deg: number, shift: number) {
  const t = (deg * Math.PI) / 180;
  const x = CENTER.x + r * 0.707 * Math.cos(t) + shift * 0.707;
  const y = CENTER.y - r * (0.408 * Math.cos(t) + 0.816 * Math.sin(t)) + shift * 0.408;
  return `${x.toFixed(1)} ${y.toFixed(1)}`;
}

function circle(r: number, shift: number) {
  const points = Array.from({ length: 120 }, (_, i) => project(r, i * 3, shift));
  return `M${points.join('L')}Z`;
}

function mix(stops: Stop[], deg: number) {
  let i = 0;
  while (i < stops.length - 2 && deg > stops[i + 1][0]) i++;
  const [a, from] = stops[i];
  const [b, to] = stops[i + 1];
  const k = Math.min(1, Math.max(0, (deg - a) / (b - a)));
  const channel = (n: number) => {
    const lo = parseInt(from.slice(n, n + 2), 16);
    return Math.round(lo + (parseInt(to.slice(n, n + 2), 16) - lo) * k);
  };
  return `rgb(${channel(1)},${channel(3)},${channel(5)})`;
}

interface BandProps {
  near: [number, number];
  far: [number, number];
  range: [number, number];
  stops: Stop[];
}

function Band({ near, far, range, stops }: BandProps) {
  const step = 2;
  const count = (range[1] - range[0]) / step;
  return (
    <g strokeWidth="0.8">
      {Array.from({ length: count }, (_, i) => {
        const a = range[0] + i * step;
        const color = mix(stops, a + 1);
        const d = `M${project(near[0], a, near[1])}L${project(near[0], a + step, near[1])}L${project(far[0], a + step, far[1])}L${project(far[0], a, far[1])}Z`;
        return <path key={a} d={d} fill={color} stroke={color} />;
      })}
    </g>
  );
}

const OUTER_SHADE: Stop[] = [[44, '#00141f'], [72, '#00202f'], [90, '#04405c'], [110, '#0a5379'], [138, '#3087b5'], [158, '#15658f'], [180, '#04507a'], [205, '#0b5d88'], [226, '#00283c']];
const BORE_SHADE: Stop[] = [[-136, '#001f2e'], [-115, '#02293c'], [-90, '#04455f'], [-68, '#07547c'], [-45, '#2f86b4'], [-30, '#1f73a0'], [0, '#04507a'], [30, '#03415f'], [46, '#002a3e']];
const HUB_SHADE: Stop[] = [[0, '#00202f'], [70, '#00283a'], [95, '#065077'], [115, '#0d618e'], [128, '#3f97c4'], [139, '#9ff8ff'], [147, '#b4ffff'], [157, '#58aedb'], [175, '#2b7fad'], [200, '#0a5a86'], [235, '#02344c'], [270, '#00202f'], [360, '#00202f']];

function Model() {
  return (
    <svg className="absolute inset-0 h-full w-full" viewBox="0 0 1424 835" fill="none" role="img" aria-label="Integral flange model">
      <path d="M415 578L697 415" stroke="#e01020" strokeDasharray="18 6 3 6" shapeRendering="crispEdges" />
      <path d="M705.500 65v356" stroke="#20e8f0" shapeRendering="crispEdges" />

      <Band near={[OUTER, 0]} far={[OUTER, BACK]} range={[44, 226]} stops={OUTER_SHADE} />
      <path d={circle(OUTER, 0) + circle(FACE_INNER, 0)} fill="#001c2a" fillRule="evenodd" stroke="#175a80" strokeWidth=".6" />
      <Band near={[FACE_INNER, 0]} far={[HUB, FRONT]} range={[0, 360]} stops={HUB_SHADE} />
      <path d={circle(HUB, FRONT) + circle(BORE, FRONT)} fill="#00263a" fillRule="evenodd" />
      <Band near={[BORE, FRONT]} far={[BORE, BACK]} range={[-136, 46]} stops={BORE_SHADE} />
      <path d={`M${Array.from({ length: 60 }, (_, i) => project(BORE, i * 3 - 133, -2)).join('L')}`} stroke="#0a3f60" strokeWidth=".6" />
      <path d={`M${Array.from({ length: 60 }, (_, i) => project(BORE, i * 3 - 133, FRONT - 2)).join('L')}`} stroke="#2a7fae" strokeWidth=".6" />
      {Array.from({ length: 36 }, (_, i) => {
        const [x, y] = project(202.3, i * 10 + 5, 0).split(' ').map(Number);
        return <ellipse key={i} cx={x} cy={y} rx="3" ry="4.500" transform={`rotate(25 ${x} ${y})`} fill="#000508" />;
      })}

      <path d="M705.500 65v185" stroke="#20e8f0" shapeRendering="crispEdges" />
      <path d="M696.500 52v192M716.500 596v180" stroke="#cc1c2c" shapeRendering="crispEdges" />
      <g fontFamily="Liberation Sans, Arial, sans-serif" fontSize="19">
        <text x="650" y="63" fill="#0d12e6">Integral Flange</text>
        <text x="380" y="602" fill="#e01010">Datum Line</text>
        <text x="660" y="796" fill="#e01010" xmlSpace="preserve">78.00 mm  [20]</text>
      </g>

      {/* Axis triad */}
      <g transform="translate(0 25)">
        <path d="M65 716c-12 12-18 25-19 43 12 6 26 6 39 0-1-18-8-31-20-43z" fill="#7d8184" fillOpacity=".45" />
        <path d="M65 730c-7 6-9 12-9 22 6 3 12 3 19 0 0-10-3-16-10-22z" fill="#4a4e50" fillOpacity=".6" />
        <path d="M65 745V722" stroke="#0a8a1e" strokeWidth="6" />
        <path d="M64 745v-23" stroke="#2fc43f" strokeWidth="2" />
        <path d="M65 745l-19 12" stroke="#8c1014" strokeWidth="5" />
        <path d="M65 745l18 11" stroke="#1010c8" strokeWidth="4" />
        <path d="M59 719l6-7 6 7-3 3h-6z" fill="#12c82a" />
        <path d="M46 752l3 6-2 5-7-1-2-6z" fill="#e81c1c" />
        <path d="M84 752l6 3-1 7-7 2-3-6z" fill="#0808b0" />
        <g fontFamily="Liberation Sans, Arial, sans-serif" fontSize="14">
          <text x="60" y="710" fill="#3fe04f">Y</text>
          <text x="30" y="761" fill="#e01010">Z</text>
          <text x="91" y="761" fill="#1010d0">X</text>
        </g>
      </g>
    </svg>
  );
}

function ViewToolbar() {
  return (
    <div className="flex w-[29px] shrink-0 flex-col items-center bg-[#eeeef2] pt-1 pl-1">
      <div className="mb-0.5 h-1 w-4 shrink-0 bg-[repeating-linear-gradient(90deg,#999_0_1px,transparent_1px_2px)]" />
      {VIEW_TOOLS.map((group, i) => (
        <div key={i} className={`flex flex-col items-center ${i > 0 ? 'mt-0.5 border-t border-[#c9c9d2] pt-[3px]' : ''}`}>
          {group.map(([name, art]) => (
            <button
              key={name}
              type="button"
              aria-label={name}
              className={`flex h-[22px] w-[22px] items-center justify-center ${name === 'Orbit' ? 'border border-[#3399ff] bg-[#e8f1fb]' : ''}`}
            >
              <Icon box={16} className="h-4 w-4">{art}</Icon>
            </button>
          ))}
        </div>
      ))}
      <Icon box={8} className="ml-3 h-2 w-2"><path d="M2 0l4 4-4 4z" fill="#111" /></Icon>
    </div>
  );
}

export default function App() {
  return (
    <div className="flex h-screen flex-col overflow-hidden bg-[#eeeef2] font-['Noto_Sans','Open_Sans',sans-serif]">
      <Defs />
      <TitleBar />
      <MenuBar />
      <Ribbon />
      <main className="flex min-h-0 flex-1">
        <LoadCasesPanel />
        <div className="ml-1 flex min-w-0 flex-1 flex-col border-l-2 border-[#777] pt-1">
          <div className="relative min-h-0 flex-1 border border-[#1e74a8] bg-linear-to-b/srgb from-[#005582] to-white">
            <Model />
          </div>
          <div className="flex h-[30px] shrink-0 items-start text-[11px] text-[#333]">
            <button type="button" className="h-[26px] px-[7px]">2D View</button>
            <button type="button" className="h-[26px] bg-[#007acc] px-[7px] text-white">3D View</button>
            <button type="button" className="h-[26px] px-[7px]">News Feed</button>
          </div>
        </div>
        <ViewToolbar />
      </main>
      <footer className="flex h-[26px] shrink-0 items-center justify-between bg-[#008e94] px-1 pt-0.5 text-[11px] text-white">
        <span>For Help, press F1</span>
        <div className="flex gap-4">
          {STATUS.map((item) => <span key={item}>{item}</span>)}
        </div>
      </footer>
    </div>
  );
}
